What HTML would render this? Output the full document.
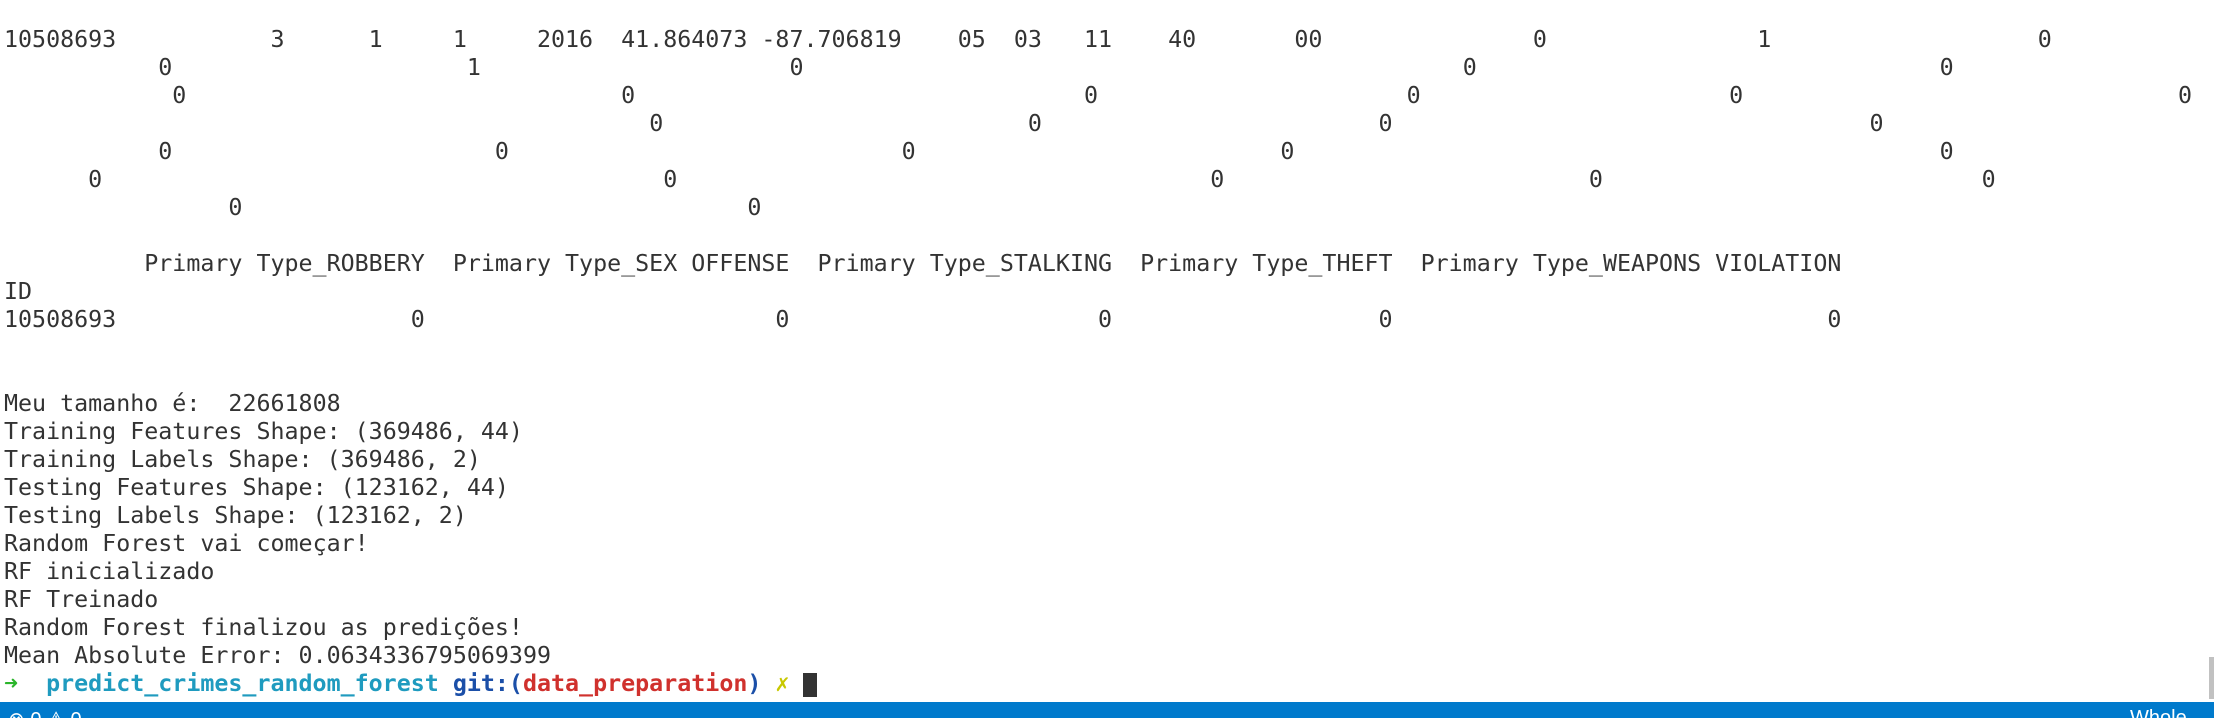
<!DOCTYPE html>
<html><head><meta charset="utf-8"><style>
html,body{margin:0;padding:0;background:#fff;width:2214px;height:718px;overflow:hidden}
#t{position:absolute;left:4px;top:26px;font-family:"DejaVu Sans Mono","Liberation Mono",monospace;font-size:23.3px;line-height:28px;color:#333}
.l{position:relative;height:28px;white-space:pre}
.l span{position:absolute;top:0;white-space:pre}
.b{font-weight:bold}
#sb{position:absolute;left:0;top:702px;width:2214px;height:16px;background:#007acc;overflow:hidden}
#sb span{position:absolute;top:5px;color:#fff;font-family:"Liberation Sans",sans-serif;font-size:20px}
#scr{position:absolute;left:2209px;top:657px;width:5px;height:42px;background:#c1c1c1}
</style></head><body>
<div id="t"><div class="l"><span style="left:0ch">10508693</span><span style="left:19ch">3</span><span style="left:26ch">1</span><span style="left:32ch">1</span><span style="left:38ch">2016</span><span style="left:44ch">41.864073</span><span style="left:54ch">-87.706819</span><span style="left:68ch">05</span><span style="left:72ch">03</span><span style="left:77ch">11</span><span style="left:83ch">40</span><span style="left:92ch">00</span><span style="left:109ch">0</span><span style="left:125ch">1</span><span style="left:145ch">0</span></div><div class="l"><span style="left:11ch">0</span><span style="left:33ch">1</span><span style="left:56ch">0</span><span style="left:104ch">0</span><span style="left:138ch">0</span></div><div class="l"><span style="left:12ch">0</span><span style="left:44ch">0</span><span style="left:77ch">0</span><span style="left:100ch">0</span><span style="left:123ch">0</span><span style="left:155ch">0</span></div><div class="l"><span style="left:46ch">0</span><span style="left:73ch">0</span><span style="left:98ch">0</span><span style="left:133ch">0</span></div><div class="l"><span style="left:11ch">0</span><span style="left:35ch">0</span><span style="left:64ch">0</span><span style="left:91ch">0</span><span style="left:138ch">0</span></div><div class="l"><span style="left:6ch">0</span><span style="left:47ch">0</span><span style="left:86ch">0</span><span style="left:113ch">0</span><span style="left:141ch">0</span></div><div class="l"><span style="left:16ch">0</span><span style="left:53ch">0</span></div><div class="l"></div><div class="l"><span style="left:10ch">Primary Type_ROBBERY  Primary Type_SEX OFFENSE  Primary Type_STALKING  Primary Type_THEFT  Primary Type_WEAPONS VIOLATION</span></div><div class="l"><span style="left:0">ID</span></div><div class="l"><span style="left:0">10508693</span><span style="left:29ch">0</span><span style="left:55ch">0</span><span style="left:78ch">0</span><span style="left:98ch">0</span><span style="left:130ch">0</span></div><div class="l"></div><div class="l"></div><div class="l"><span style="left:0">Meu tamanho é:  22661808</span></div><div class="l"><span style="left:0">Training Features Shape: (369486, 44)</span></div><div class="l"><span style="left:0">Training Labels Shape: (369486, 2)</span></div><div class="l"><span style="left:0">Testing Features Shape: (123162, 44)</span></div><div class="l"><span style="left:0">Testing Labels Shape: (123162, 2)</span></div><div class="l"><span style="left:0">Random Forest vai começar!</span></div><div class="l"><span style="left:0">RF inicializado</span></div><div class="l"><span style="left:0">RF Treinado</span></div><div class="l"><span style="left:0">Random Forest finalizou as predições!</span></div><div class="l"><span style="left:0">Mean Absolute Error: 0.0634336795069399</span></div><div class="l b"><span style="left:0;color:#2bb52b">➜</span><span style="left:3ch;color:#1f9bbf">predict_crimes_random_forest</span><span style="left:32ch;color:#1b4fa8">git:(</span><span style="left:37ch;color:#d0312d">data_preparation</span><span style="left:53ch;color:#1b4fa8">)</span><span style="left:55ch;color:#c8c800;font-weight:normal">✗</span><span style="left:57ch;top:3px;width:14px;height:24px;background:#333"></span></div></div>
<div id="scr"></div>
<div id="sb"><span style="left:8px">⊗ 0 ⚠ 0</span><span style="left:2130px">Whole</span></div>
</body></html>
